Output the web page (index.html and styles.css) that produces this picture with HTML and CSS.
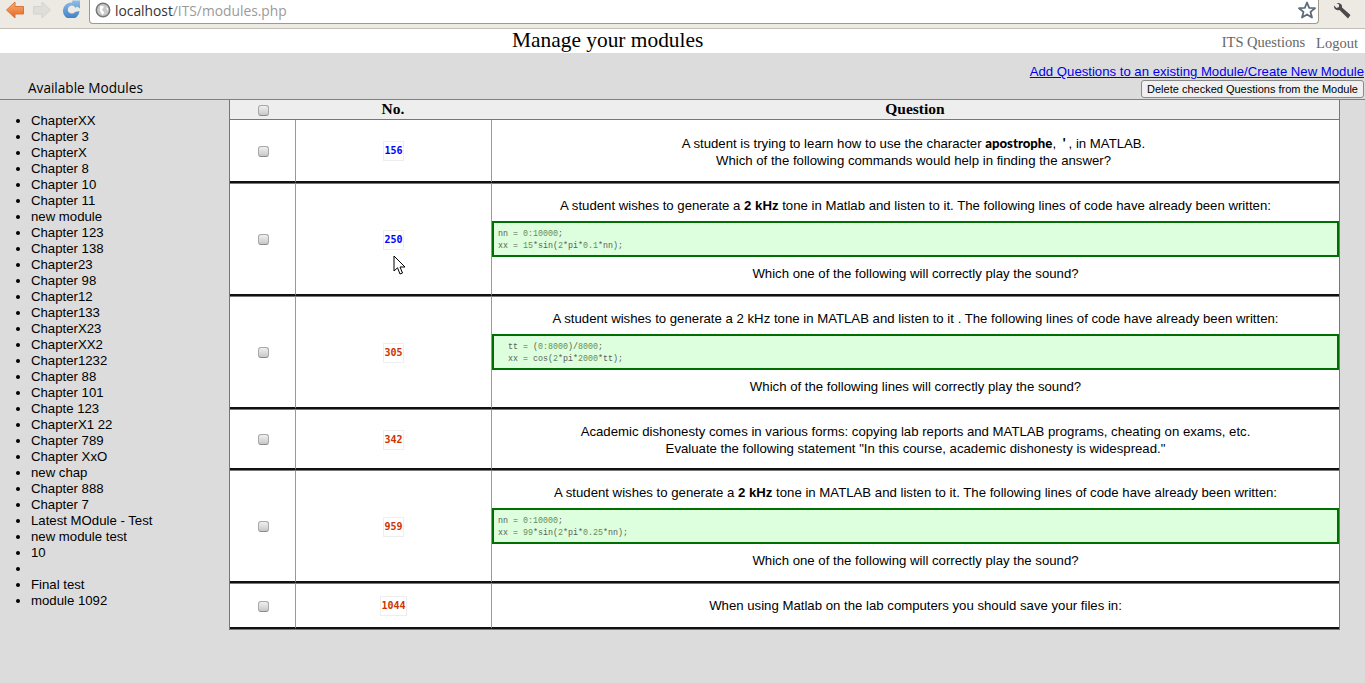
FILE: index.html
```html
<!DOCTYPE html>
<html lang="en">
<head>
  <meta charset="UTF-8">
  <title>Manage your modules</title>
  <link rel="stylesheet" href="styles.css">
</head>
<body>
  <div class="toolbar">
    <svg class="nav-icon" width="18" height="18" viewBox="0 0 18 18">
      <defs>
        <linearGradient id="orange" x1="0" y1="0" x2="0" y2="1"><stop offset="0" stop-color="#f8b078"/><stop offset="1" stop-color="#e4661c"/></linearGradient>
      </defs>
      <path d="M0.500 9 L9 1 V5.500 H17.500 V13 H9 V17 Z" fill="url(#orange)" stroke="#d8743a" stroke-linejoin="round"/>
    </svg>
    <svg class="nav-icon" width="18" height="18" viewBox="0 0 18 18"><path d="M17.500 9 L9 1 V5.500 H0.500 V13 H9 V17 Z" fill="#e0ded8" stroke="#d4d2cc" stroke-linejoin="round"/></svg>
    <svg class="nav-icon" width="18" height="18" viewBox="0 0 18 18">
      <defs>
        <linearGradient id="blue" x1="0" y1="0" x2="0" y2="1"><stop offset="0" stop-color="#8fbde8"/><stop offset="1" stop-color="#3f7fc4"/></linearGradient>
      </defs>
      <path d="M17.500 11 A8.300 8.300 0 1 1 10 2.500 L10.500 0.500 L18 0.500 V8.500 L15 6.500 L13.500 8 A4 4 0 1 0 13 12 Z" fill="url(#blue)"/>
    </svg>
    <div class="omnibox">
      <svg width="16" height="16" viewBox="0 0 16 16"><circle cx="8" cy="8" r="6.700" fill="#c9c9c9" stroke="#777" stroke-width="1.500"/><path d="M5 3.500 L9 4.500 L7 8 L9.500 10.500 L7.500 13 L5 9 Z M11 5 L13 6.500 L12.500 9 Z" fill="#fff"/></svg>
      <span class="host">localhost</span><span class="path">/ITS/modules.php</span>
      <svg class="star" width="18" height="18" viewBox="0 0 18 18"><path d="M9 1.500 L11.200 6.800 L17 7.200 L12.500 10.900 L14 16.500 L9 13.500 L4 16.500 L5.500 10.900 L1 7.200 L6.800 6.800 Z" fill="#fff" stroke="#5c6c7c" stroke-width="1.800" stroke-linejoin="round"/></svg>
    </div>
    <svg class="wrench" width="18" height="16" viewBox="0 0 18 16"><path d="M1 2.500 L3.500 5 L6 4 L6 1.500 L3.500 0 C7 -0.500 9.500 1.500 9 4.500 L17.500 12 L15 15.500 L6.500 7 C3 8 0.500 6 1 2.500 Z" fill="#4a4a4a"/></svg>
  </div>

  <div class="topbar">
    <h1 class="page-title">Manage your modules</h1>
    <a class="top-link" href="#">ITS Questions</a>
    <a class="top-link logout" href="#">Logout</a>
  </div>

  <div class="actions">
    <div class="avail">Available Modules</div>
    <div class="action-links">
      <a href="#">Add Questions to an existing Module/Create New Module</a>
      <button type="button">Delete checked Questions from the Module</button>
    </div>
  </div>

  <div class="main">
    <ul class="modules">
      <li>ChapterXX</li>
      <li>Chapter 3</li>
      <li>ChapterX</li>
      <li>Chapter 8</li>
      <li>Chapter 10</li>
      <li>Chapter 11</li>
      <li>new module</li>
      <li>Chapter 123</li>
      <li>Chapter 138</li>
      <li>Chapter23</li>
      <li>Chapter 98</li>
      <li>Chapter12</li>
      <li>Chapter133</li>
      <li>ChapterX23</li>
      <li>ChapterXX2</li>
      <li>Chapter1232</li>
      <li>Chapter 88</li>
      <li>Chapter 101</li>
      <li>Chapte 123</li>
      <li>ChapterX1 22</li>
      <li>Chapter 789</li>
      <li>Chapter XxO</li>
      <li>new chap</li>
      <li>Chapter 888</li>
      <li>Chapter 7</li>
      <li>Latest MOdule - Test</li>
      <li>new module test</li>
      <li>10</li>
      <li>&nbsp;</li>
      <li>Final test</li>
      <li>module 1092</li>
    </ul>

    <table class="questions">
      <thead>
        <tr>
          <th class="col-check"><input type="checkbox"></th>
          <th class="col-no">No.</th>
          <th>Question</th>
        </tr>
      </thead>
      <tbody>
        <tr class="row-short">
          <td><input type="checkbox"></td>
          <td><span class="qid blue">156</span></td>
          <td>A student is trying to learn how to use the character <b class="comic">apostrophe</b>, <b class="comic quote">'</b>, in MATLAB.<br>Which of the following commands would help in finding the answer?</td>
        </tr>
        <tr class="row-code">
          <td><input type="checkbox"></td>
          <td><span class="qid blue">250</span></td>
          <td>
            <p>A student wishes to generate a <b>2 kHz</b> tone in Matlab and listen to it. The following lines of code have already been written:</p>
            <div class="code">
              <div>nn = <i>0:10000</i>;</div>
              <div>xx = <i>15</i>*sin(<i>2</i>*pi*<i>0.1</i>*nn);</div>
            </div>
            <p>Which one of the following will correctly play the sound?</p>
          </td>
        </tr>
        <tr class="row-code">
          <td><input type="checkbox"></td>
          <td><span class="qid red">305</span></td>
          <td>
            <p>A student wishes to generate a 2 kHz tone in MATLAB and listen to it . The following lines of code have already been written:</p>
            <div class="code indent">
              <div>tt = (<i>0:8000</i>)/<i>8000</i>;</div>
              <div>xx = cos(<i>2</i>*pi*<i>2000</i>*tt);</div>
            </div>
            <p>Which of the following lines will correctly play the sound?</p>
          </td>
        </tr>
        <tr class="row-mid">
          <td><input type="checkbox"></td>
          <td><span class="qid red">342</span></td>
          <td>Academic dishonesty comes in various forms: copying lab reports and MATLAB programs, cheating on exams, etc.<br>Evaluate the following statement "In this course, academic dishonesty is widespread."</td>
        </tr>
        <tr class="row-code">
          <td><input type="checkbox"></td>
          <td><span class="qid red">959</span></td>
          <td>
            <p>A student wishes to generate a <b>2 kHz</b> tone in MATLAB and listen to it. The following lines of code have already been written:</p>
            <div class="code">
              <div>nn = <i>0:10000</i>;</div>
              <div>xx = <i>99</i>*sin(<i>2</i>*pi*<i>0.25</i>*nn);</div>
            </div>
            <p>Which one of the following will correctly play the sound?</p>
          </td>
        </tr>
        <tr class="row-one">
          <td><input type="checkbox"></td>
          <td><span class="qid red">1044</span></td>
          <td>When using Matlab on the lab computers you should save your files in:</td>
        </tr>
      </tbody>
    </table>
  </div>

  <svg class="cursor" width="14" height="21" viewBox="0 0 14 21"><path d="M1 1 V16 L4.500 12.800 L7 19 L9.500 18 L7 12 H12 Z" fill="#fff" stroke="#000"/></svg>
</body>
</html>
```

FILE: styles.css
```css
html, body {
  margin: 0;
  padding: 0;
}

body {
  background-color: #dcdcdc;
  color: #000;
  font-family: "Liberation Sans", Arial, sans-serif;
  font-size: 13.200px;
  height: 683px;
  overflow: hidden;
  position: relative;
}

/* browser bar */
.toolbar {
  display: flex;
  align-items: flex-start;
  height: 29px;
  box-sizing: border-box;
  background-color: #edeae4;
  border-bottom: 1px solid #c4c0b8;
}

.nav-icon {
  margin: 1px 0 0 6px;
  flex: none;
}

.nav-icon + .nav-icon {
  margin-left: 9px;
}

.nav-icon + .nav-icon + .nav-icon {
  margin-top: 0;
  margin-left: 11px;
}

.omnibox {
  display: flex;
  align-items: center;
  flex: 1;
  height: 24px;
  margin-left: 9px;
  padding: 0 0 3px 5px;
  background-color: #fff;
  border: 1px solid #a09a88;
  border-top: none;
  border-radius: 0 0 4px 4px;
  box-sizing: border-box;
  font-family: "Open Sans", sans-serif;
  font-size: 13.800px;
}

.host {
  margin-left: 4px;
  color: #333;
}

.path {
  color: #9a9a9a;
}

.star {
  margin-left: auto;
  margin-right: 2px;
}

.wrench {
  margin: 3px 14px 0;
  flex: none;
}

/* page header */
.topbar {
  display: flex;
  align-items: flex-start;
  height: 24px;
  background-color: #fff;
  font-family: "Liberation Serif", serif;
}

.page-title {
  margin: -1px 0 0 512px;
  font-size: 21.400px;
  font-weight: normal;
  line-height: 24px;
}

.top-link {
  color: #666;
  font-size: 14.500px;
  line-height: 16px;
  margin: 5px 0 0 auto;
  text-decoration: none;
}

.logout {
  margin: 6px 7px 0 11px;
}

.actions {
  display: flex;
  justify-content: space-between;
  height: 47px;
  box-sizing: border-box;
  border-bottom: 1px solid #808080;
}

.avail {
  margin: 26px 0 0 28px;
  font-family: "Open Sans", sans-serif;
  font-size: 13.600px;
  line-height: 18px;
}

.action-links {
  display: flex;
  flex-direction: column;
  align-items: flex-end;
  margin-top: 10px;
  margin-right: 1px;
}

.action-links a {
  color: #0000ee;
  font-size: 13.170px;
  line-height: 17px;
}

.action-links button {
  height: 18px;
  padding: 0 5px;
  font-family: "Liberation Sans", sans-serif;
  font-size: 11px;
  color: #000;
  background-color: #f0f0f0;
  border: 1px solid #8a8a8a;
  border-radius: 3px;
}

.main {
  display: flex;
  align-items: flex-start;
}

.modules {
  flex: none;
  width: 198px;
  margin: 13px 0 0;
  padding: 0 0 0 31px;
  line-height: 16px;
}

/* questions table */
.questions {
  width: 1111px;
  table-layout: fixed;
  border-collapse: separate;
  border-spacing: 0;
  background-color: #fff;
  border-left: 1px solid #777;
  border-right: 1px solid #777;
  border-bottom: 1px solid #777;
}

.col-check {
  width: 65px;
}

.col-no {
  width: 196px;
}

.questions th {
  box-sizing: border-box;
  height: 20px;
  padding: 0 0 1px;
  background-color: #eee;
  border-bottom: 1px solid #777;
  font-family: "Liberation Serif", serif;
  font-size: 15.500px;
  line-height: 16px;
}

.questions td {
  box-sizing: border-box;
  padding: 0;
  text-align: center;
  border-left: 1px solid #999;
  border-top: 1px solid #777;
  border-bottom: 2px solid #111;
  line-height: 17px;
}

.questions td:first-child {
  border-left: none;
}

.questions tbody tr:first-child td {
  border-top: none;
}

.row-short td { height: 63px; }
.row-code td { height: 113px; }
.row-mid td { height: 61px; }
.row-one td { height: 46px; }

.row-short td:last-child,
.row-mid td:last-child {
  padding-top: 2px;
}

.row-short td:last-child {
  padding-right: 4px;
}

.row-code td:first-child,
.row-mid td:first-child {
  padding-bottom: 2px;
}

.questions p {
  margin: 0;
  line-height: 17px;
}

.code {
  margin: 7px 0 8px;
  padding: 5px 4px 3px;
  background-color: #ddffdd;
  border: 2px solid #006e00;
  font-family: "Liberation Mono", monospace;
  font-size: 8.330px;
  line-height: 12px;
  color: #5c5c5c;
  text-align: left;
}

.code div {
  white-space: pre;
}

.code i {
  font-style: normal;
  color: #6a8a5a;
}

.code.indent {
  padding-left: 14px;
}

.comic {
  font-family: Lato, sans-serif;
  font-weight: 900;
}

.quote {
  padding: 0 3px;
}

.qid {
  display: inline-block;
  height: 18px;
  border: 1px solid #eee;
  font-family: "DejaVu Sans Mono", monospace;
  font-size: 10px;
  font-weight: bold;
  line-height: 18px;
  vertical-align: middle;
}

.row-code .qid,
.row-mid .qid {
  margin-top: 2px;
}

.blue {
  color: #0000ff;
}

.red {
  color: #cc3300;
}

input[type="checkbox"] {
  appearance: none;
  display: inline-block;
  width: 11px;
  height: 11px;
  margin: 0 0 0 1px;
  vertical-align: middle;
  background: linear-gradient(#f0f0f0, #c8c8c8);
  border: 1px solid #a8a8a8;
  border-bottom-color: #8a8a8a;
  border-radius: 3px;
}

.cursor {
  position: absolute;
  left: 393px;
  top: 255px;
}
```
